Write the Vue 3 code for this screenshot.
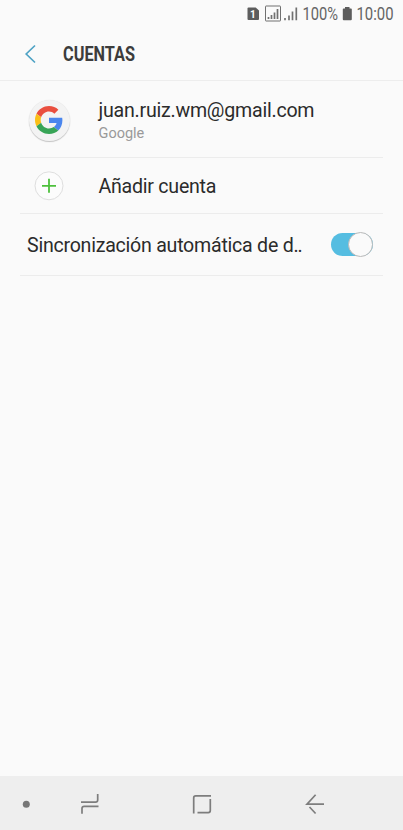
<script setup>
import { ref } from 'vue'

const account = { email: 'juan.ruiz.wm@gmail.com', provider: 'Google' }
const autoSync = ref(true)
</script>

<template>
  <div class="screen">
    <div class="status-bar">
      <svg width="403" height="28" viewBox="0 0 403 28">
        <!-- SIM slot -->
        <path d="M248.500 7.500h7.200l3.300 3v8.500q0 1-1 1h-9.500q-1 0-1-1V8.500q0-1 1-1z" fill="#5d5d5d" />
        <text x="250" y="17.500" class="sim">1</text>
        <!-- signal strength -->
        <rect x="265.500" y="6" width="15" height="15" rx=".5" fill="none" stroke="#707070" />
        <path d="M268.500 17v2M271.500 15v4M274.500 12.500v6.500M277.500 9v10" class="bars" />
        <path d="M285 18v2.200M289 15.500v4.700M292.500 11.500v8.700M296.300 7.500v12.700" class="bars" />
        <text x="302.500" y="20" textLength="35.500" lengthAdjust="spacingAndGlyphs" class="status-text">100%</text>
        <path d="M345 7h4.500v1.500h1.500q.8 0 .8.800v10q0 .9-.9.900h-7.200q-.9 0-.9-.9v-10q0-.8.800-.8h1.400z" fill="#5d5d5d" />
        <text x="356.500" y="20" textLength="37" lengthAdjust="spacingAndGlyphs" class="status-text">10:00</text>
      </svg>
    </div>

    <header class="header">
      <svg class="back" width="14" height="20" viewBox="0 0 14 20">
        <path d="M11 1.500L2.200 10l8.800 8.500" fill="none" stroke="#4fa3c5" stroke-width="1.700" />
      </svg>
      <svg class="title" width="120" height="36" viewBox="0 0 120 36">
        <text x="0" y="25" textLength="72" lengthAdjust="spacingAndGlyphs">CUENTAS</text>
      </svg>
    </header>

    <main class="list">
      <div class="row account">
        <div class="icon">
          <div class="google">
            <svg width="28" height="28" viewBox="0 0 48 48">
              <path fill="#e94f3f" d="M24 9.500c3.540 0 6.710 1.220 9.210 3.600l6.850-6.850C35.900 2.380 30.470 0 24 0 14.620 0 6.510 5.380 2.560 13.220l7.980 6.190C12.430 13.720 17.740 9.500 24 9.500z" />
              <path fill="#4a86ee" d="M46.980 24.550c0-1.570-.15-3.090-.38-4.550H24v9.020h12.940c-.58 2.960-2.260 5.480-4.780 7.180l7.730 6c4.510-4.180 7.090-10.360 7.090-17.650z" />
              <path fill="#fbbf16" d="M10.530 28.590c-.48-1.450-.76-2.990-.76-4.590s.27-3.140.76-4.590l-7.980-6.190C.92 16.460 0 20.120 0 24c0 3.880.92 7.540 2.560 10.780l7.970-6.190z" />
              <path fill="#37a456" d="M24 48c6.480 0 11.930-2.130 15.890-5.810l-7.730-6c-2.150 1.450-4.920 2.300-8.160 2.300-6.260 0-11.570-4.220-13.470-9.910l-7.980 6.190C6.510 42.620 14.620 48 24 48z" />
            </svg>
          </div>
        </div>
        <div class="text">
          <div class="email">{{ account.email }}</div>
          <div class="provider">{{ account.provider }}</div>
        </div>
      </div>

      <div class="row add">
        <div class="icon">
          <svg width="30" height="30" viewBox="0 0 30 30">
            <circle cx="15" cy="14.800" r="14" fill="#fcfcfc" stroke="#dedede" />
            <path d="M15 7.800v14M8 14.800h14" stroke="#4dc03c" stroke-width="1.800" />
          </svg>
        </div>
        <div class="label">Añadir cuenta</div>
      </div>

      <div class="row sync">
        <div class="label">Sincronización automática de d<span class="dots">..</span></div>
        <div class="switch" :class="{ on: autoSync }" @click="autoSync = !autoSync">
          <div class="knob"></div>
        </div>
      </div>
    </main>

    <nav class="nav-bar">
      <svg width="403" height="54" viewBox="0 0 403 54">
        <circle cx="26.300" cy="28.200" r="3.500" fill="#777" />
        <g fill="none" stroke="#7d7d7d" stroke-width="1.700">
          <path d="M81 26.200h14.500q2.200 0 2.200-2.200v-6" />
          <path d="M98.500 30.300H84.200q-2.200 0-2.200 2.200v5.300" />
          <path d="M211 19.900h-15.300q-2 0-2 2v15.600" />
          <path d="M210.300 23v11.600q0 2-2 2H197.500" />
          <path d="M324 28.200H307l8.600-9.400M309.500 31l6.100 6.500" />
        </g>
      </svg>
    </nav>
  </div>
</template>

<style>
body {
  margin: 0;
}
</style>

<style scoped>
.screen {
  display: flex;
  flex-direction: column;
  width: 403px;
  height: 830px;
  overflow: hidden;
  background: #fafafa;
  font-family: Roboto, sans-serif;
  color: #2b2b2b;
}

svg {
  display: block;
  flex: none;
}

.status-bar {
  height: 28px;
}

.status-text {
  font-size: 18px;
  fill: #646464;
}

.sim {
  font-size: 10px;
  font-weight: 700;
  fill: #fff;
}

.bars {
  fill: none;
  stroke: #707070;
  stroke-width: 1.7;
}

.header {
  box-sizing: border-box;
  display: flex;
  align-items: center;
  gap: 25px;
  height: 53px;
  padding-left: 24px;
  border-bottom: 1px solid #ededed;
}

.title text {
  font-size: 19.5px;
  font-weight: 700;
  fill: #3c3c3c;
}

.list {
  flex: 1;
  padding: 0 20px;
}

.row {
  box-sizing: border-box;
  display: flex;
  align-items: center;
  border-bottom: 1px solid #ececec;
}

.account {
  height: 77px;
  padding-top: 2px;
}

.account .text {
  padding-top: 1px;
}

.add {
  height: 56px;
}

.add .label,
.sync .label {
  padding-top: 2px;
}

.sync {
  height: 62px;
  padding: 0 10px 0 7px;
  justify-content: space-between;
}

.icon {
  display: flex;
  justify-content: center;
  width: 58px;
  margin-right: 20.5px;
}

.google {
  display: flex;
  align-items: center;
  justify-content: center;
  width: 41px;
  height: 41px;
  border-radius: 50%;
  background: #f3f3f3;
  box-shadow: 0 1px 1px #c4c4c4, 0 0 1px #ddd;
}

.email {
  font-size: 19.6px;
  line-height: 24px;
  letter-spacing: -0.23px;
}

.provider {
  margin-top: 2px;
  font-size: 14.5px;
  line-height: 18px;
  color: #999;
}

.label {
  font-size: 19.6px;
  line-height: 24px;
  letter-spacing: -0.25px;
  white-space: nowrap;
}

.dots {
  letter-spacing: -1px;
}

.switch {
  box-sizing: border-box;
  display: flex;
  align-items: center;
  width: 42px;
  height: 23px;
  border-radius: 12px;
  background: #c8c8c8;
}

.switch.on {
  justify-content: flex-end;
  background: #55bde1;
}

.knob {
  box-sizing: border-box;
  flex: none;
  width: 25px;
  height: 25px;
  border: 1px solid #b9b9b9;
  border-radius: 50%;
  background: #fafafa;
}

.nav-bar {
  height: 54px;
  background: #eee;
}
</style>
